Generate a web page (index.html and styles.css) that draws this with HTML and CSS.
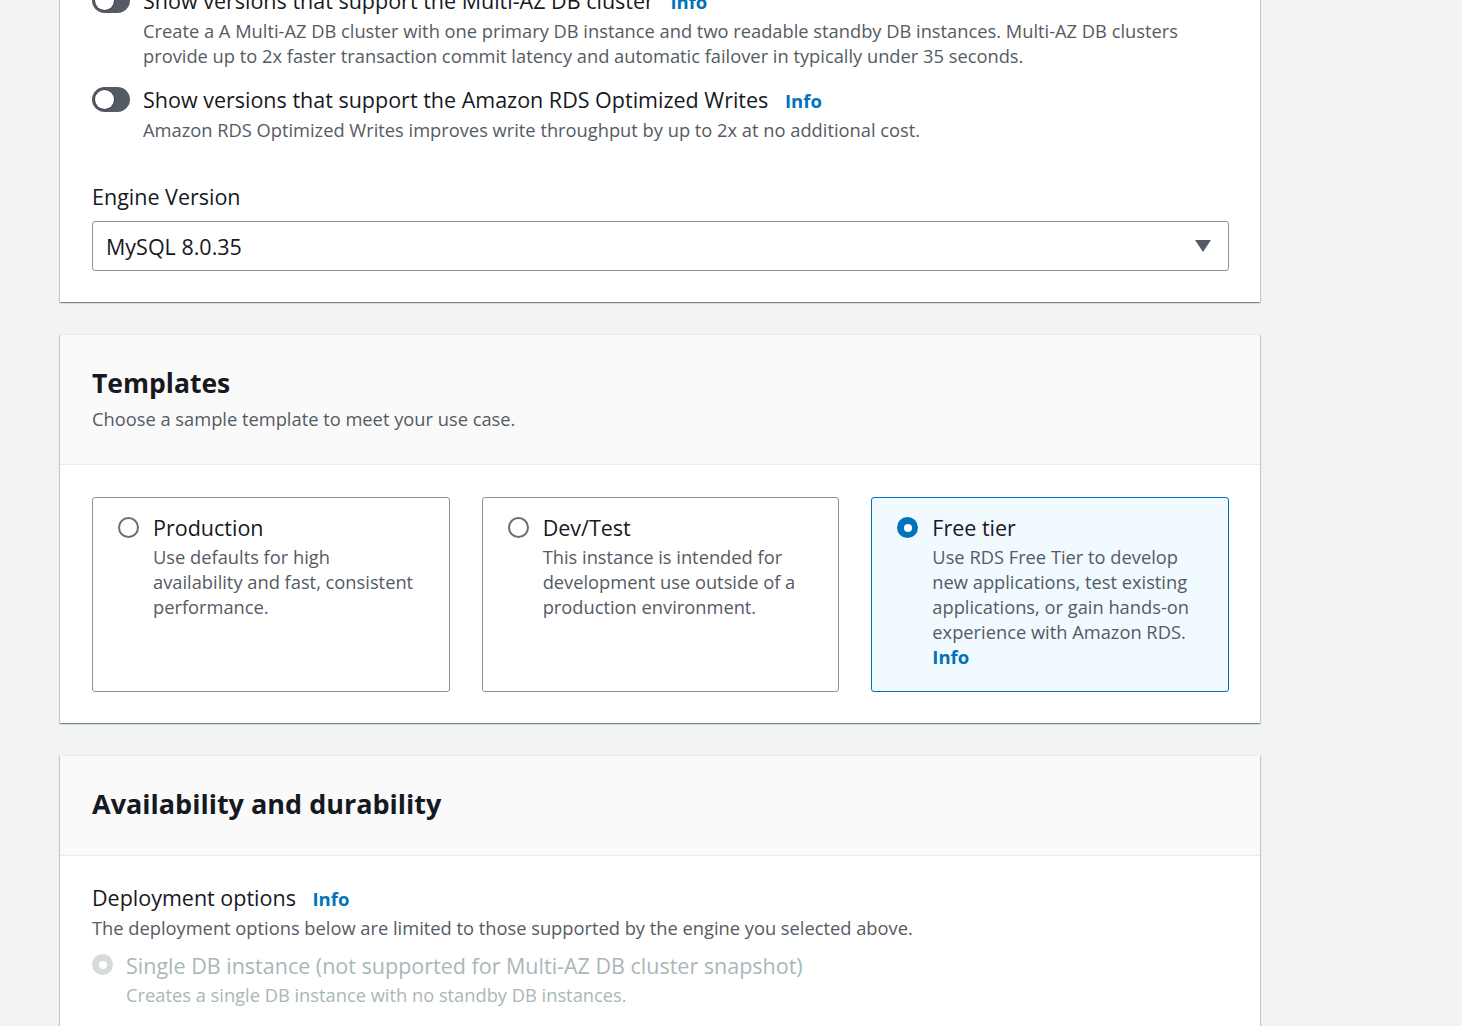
FILE: index.html
```html
<!DOCTYPE html>
<html lang="en">
<head>
<meta charset="utf-8">
<title>Create database</title>
<link rel="stylesheet" href="styles.css">
</head>
<body>
<main class="page">
  <section class="card card-first">
    <div class="card-body">
      <div class="toggle-row">
        <span class="toggle"><span class="knob"></span></span>
        <div class="toggle-text">
          <div class="toggle-label">Show versions that support the Multi-AZ DB cluster <a class="info">Info</a></div>
          <div class="desc">Create a A Multi-AZ DB cluster with one primary DB instance and two readable standby DB instances. Multi-AZ DB clusters provide up to 2x faster transaction commit latency and automatic failover in typically under 35 seconds.</div>
        </div>
      </div>
      <div class="toggle-row">
        <span class="toggle"><span class="knob"></span></span>
        <div class="toggle-text">
          <div class="toggle-label">Show versions that support the Amazon RDS Optimized Writes <a class="info">Info</a></div>
          <div class="desc">Amazon RDS Optimized Writes improves write throughput by up to 2x at no additional cost.</div>
        </div>
      </div>
      <div class="field">
        <div class="field-label">Engine Version</div>
        <div class="select">
          <span class="select-value">MySQL 8.0.35</span>
          <svg class="caret" width="16" height="12" viewBox="0 0 16 12"><path d="M0 0H16L8 12Z" fill="#545b64"/></svg>
        </div>
      </div>
    </div>
  </section>

  <section class="card">
    <header class="card-header">
      <h2 class="card-title">Templates</h2>
      <p class="card-subtitle">Choose a sample template to meet your use case.</p>
    </header>
    <div class="card-body">
      <div class="tiles">
        <div class="tile">
          <span class="radio"></span>
          <div class="tile-text">
            <div class="tile-label">Production</div>
            <div class="desc">Use defaults for high availability and fast, consistent performance.</div>
          </div>
        </div>
        <div class="tile">
          <span class="radio"></span>
          <div class="tile-text">
            <div class="tile-label">Dev/Test</div>
            <div class="desc">This instance is intended for development use outside of a production environment.</div>
          </div>
        </div>
        <div class="tile tile-selected">
          <span class="radio radio-checked"></span>
          <div class="tile-text">
            <div class="tile-label">Free tier</div>
            <div class="desc">Use RDS Free Tier to develop new applications, test existing applications, or gain hands-on experience with Amazon RDS. <a class="info info-block">Info</a></div>
          </div>
        </div>
      </div>
    </div>
  </section>

  <section class="card">
    <header class="card-header card-header-solo">
      <h2 class="card-title card-title-wide">Availability and durability</h2>
    </header>
    <div class="card-body card-body-deploy">
      <div class="field-label">Deployment options <a class="info">Info</a></div>
      <div class="desc desc-dark">The deployment options below are limited to those supported by the engine you selected above.</div>
      <div class="option option-disabled">
        <span class="radio radio-disabled"></span>
        <div class="option-text">
          <div class="option-label">Single DB instance (not supported for Multi-AZ DB cluster snapshot)</div>
          <div class="desc">Creates a single DB instance with no standby DB instances.</div>
        </div>
      </div>
    </div>
  </section>
</main>
</body>
</html>
```
FILE: styles.css
```css
* { box-sizing: border-box; }

html, body {
  margin: 0;
  padding: 0;
}

body {
  background: #f2f3f3;
  font-family: "Open Sans", "Noto Sans", Arial, sans-serif;
  color: #16191f;
  overflow: hidden;
}

.page {
  width: 1200px;
  margin-left: 60px;
  margin-top: -47px;
}

.card {
  background: #ffffff;
  border-top: 1px solid #eaeded;
  box-shadow: 0 1px 1px 0 rgba(0, 28, 36, 0.3), 1px 1px 1px 0 rgba(0, 28, 36, 0.15), -1px 1px 1px 0 rgba(0, 28, 36, 0.15);
  margin-bottom: 32px;
}

.card-body {
  padding: 32px 31px 31px 32px;
}

.card-header {
  background: #fafafa;
  border-bottom: 1px solid #eaeded;
  padding: 31px 32px 33px 32px;
}

.card-header-solo {
  padding-bottom: 34px;
}

.card-title {
  margin: 0;
  font-size: 26.5px;
  line-height: 34px;
  font-weight: 700;
  color: #16191f;
}

.card-title-wide {
  font-size: 27px;
}

.card-subtitle {
  margin: 6px 0 0 0;
  font-size: 18.3px;
  line-height: 25px;
  color: #545b64;
}

.desc {
  font-size: 18.3px;
  line-height: 25px;
  color: #545b64;
}

.info {
  color: #0073bb;
  font-weight: 700;
  font-size: 18.5px;
  margin-left: 11px;
  text-decoration: none;
}

.info-block {
  margin-left: 0;
  display: block;
}

/* toggles */
.toggle-row {
  display: flex;
  align-items: flex-start;
  gap: 13px;
  margin-bottom: 17px;
}

.toggle {
  flex: none;
  position: relative;
  width: 38px;
  height: 25px;
  border-radius: 13px;
  background: #545b64;
  margin-top: 2px;
}

.knob {
  position: absolute;
  left: 3px;
  top: 3px;
  width: 19px;
  height: 19px;
  border-radius: 50%;
  background: #ffffff;
  box-shadow: 0 0 0 1px rgba(22, 25, 31, 0.25);
}

.toggle-label {
  font-size: 21.5px;
  line-height: 28px;
  padding-top: 1px;
}

.toggle-text .desc {
  margin-top: 2px;
}

/* field */
.field {
  margin-top: 41px;
}

.field-label {
  font-size: 21.5px;
  line-height: 28px;
  color: #16191f;
}

.select {
  margin-top: 10px;
  height: 50px;
  border: 1px solid #879596;
  border-radius: 3px;
  display: flex;
  align-items: center;
  justify-content: space-between;
  padding: 0 17px 0 13px;
}

.select-value {
  font-size: 21.5px;
}

/* tiles */
.tiles {
  display: grid;
  grid-template-columns: repeat(3, 1fr);
  column-gap: 32px;
}

.tile {
  display: flex;
  align-items: flex-start;
  gap: 14px;
  border: 1px solid #879596;
  border-radius: 3px;
  padding: 16px 27px 19px 25px;
  min-height: 195px;
}

.tile-selected {
  border-color: #0073bb;
  background: #f1faff;
}

.radio {
  flex: none;
  width: 21px;
  height: 21px;
  border-radius: 50%;
  border: 2px solid #687078;
  background: #ffffff;
  margin-top: 3px;
  position: relative;
}

.radio-checked {
  border: none;
  background: #0073bb;
}

.radio-checked::after,
.radio-disabled::after {
  content: "";
  position: absolute;
  left: 50%;
  top: 50%;
  width: 8px;
  height: 8px;
  margin: -4px 0 0 -4px;
  border-radius: 50%;
  background: #ffffff;
}

.radio-disabled {
  border: none;
  background: #d5dbdb;
}

.tile-label {
  font-size: 21.5px;
  line-height: 28px;
}

.tile-text .desc {
  margin-top: 2px;
}

/* deployment */
.card-body-deploy {
  padding-top: 28px;
}

.desc-dark {
  margin-top: 2px;
}

.option {
  display: flex;
  align-items: flex-start;
  gap: 13px;
  margin-top: 12px;
}

.option .radio {
  margin-top: 2px;
}

.option-label {
  font-size: 21.5px;
  line-height: 28px;
  color: #aab7b8;
}

.option-disabled .desc {
  margin-top: 2px;
  color: #aab7b8;
}
```
